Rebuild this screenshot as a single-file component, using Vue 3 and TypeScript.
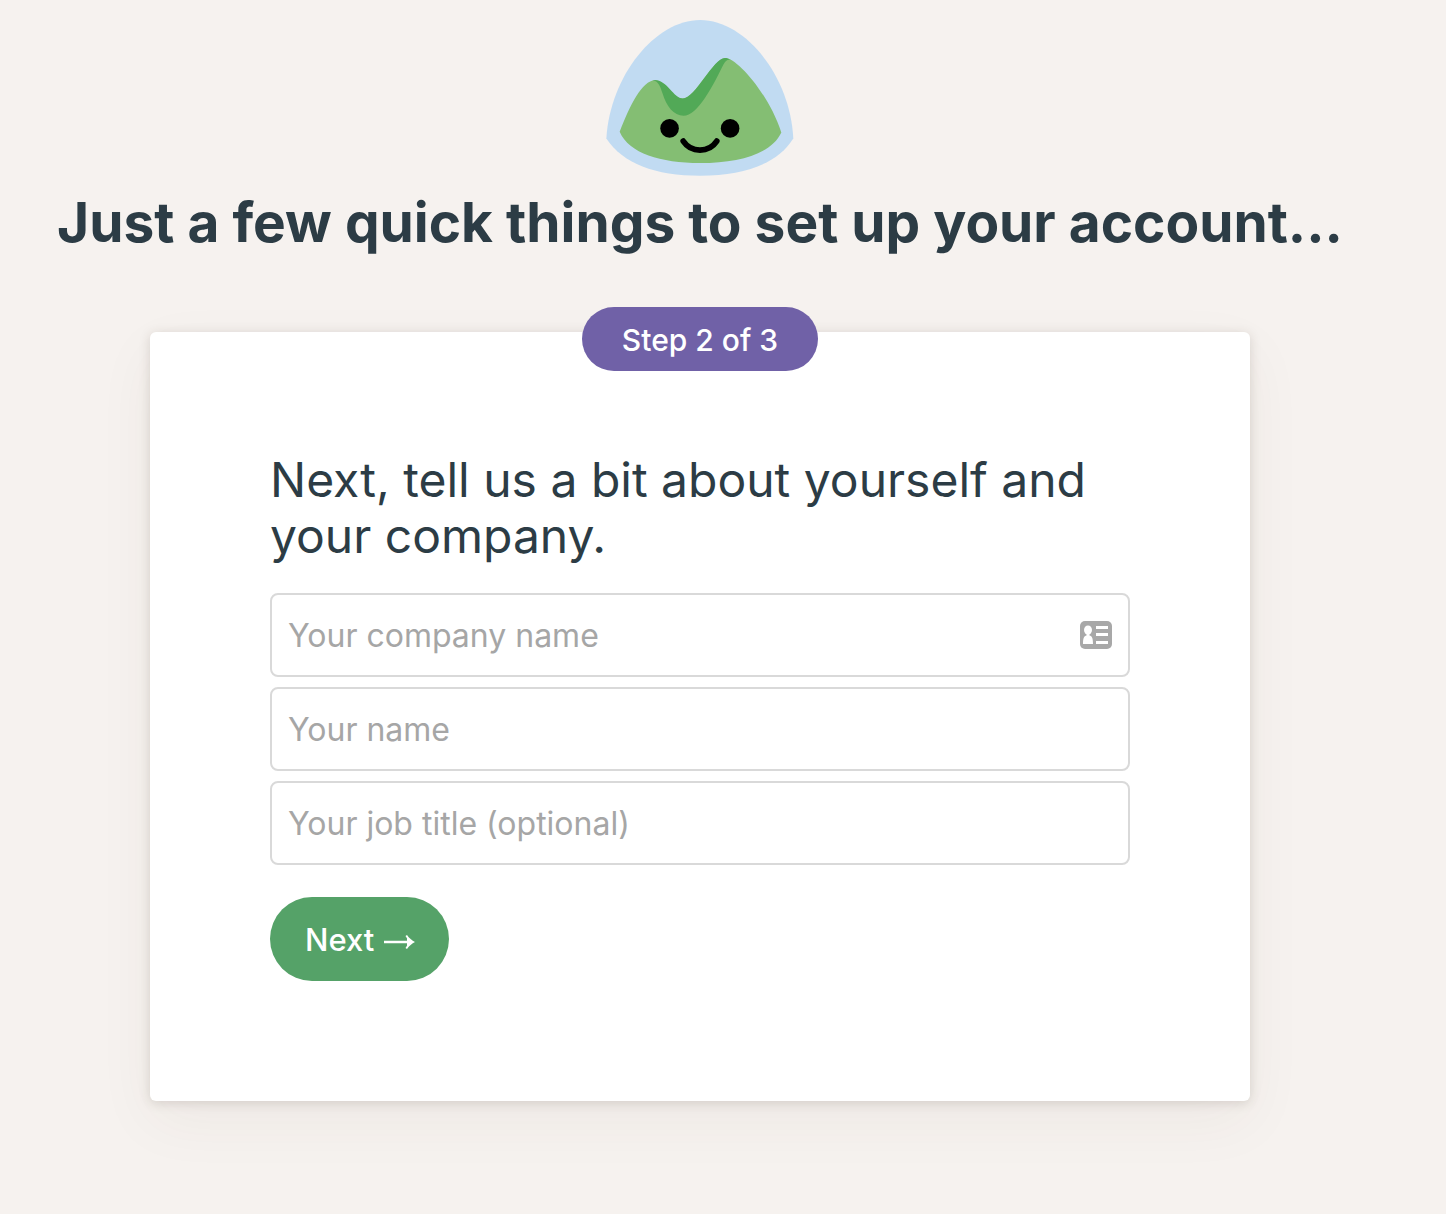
<script setup lang="ts">
import { reactive } from 'vue'

interface Field {
  id: 'company' | 'name' | 'title'
  placeholder: string
  hasContactIcon?: boolean
}

const fields: Field[] = [
  { id: 'company', placeholder: 'Your company name', hasContactIcon: true },
  { id: 'name', placeholder: 'Your name' },
  { id: 'title', placeholder: 'Your job title (optional)' },
]

const form = reactive({ company: '', name: '', title: '' })
</script>

<template>
  <main class="page">
    <header class="intro">
      <svg class="logo" viewBox="49 29 563 469" aria-hidden="true">
        <path fill="#c1dbf2" d="M331 29C467 29 602 198 611 385C564 460 466 497 331 497C196 497 98 460 49 385C60 198 195 29 331 29Z" />
        <path fill="#84be73" d="M89 365C119 287 157 210 195 210C229 210 247 265 279 265C315 265 371 143 407 143C440 143 535 246 575 367C546 430 450 459 331 459C212 459 117 430 89 365Z" />
        <path fill="#52a957" d="M188 210C231 204 249 265 279 265C316 265 371 143 405 143C411 143 416 145 422 149C413 147 407 151 401 163C367 232 323 317 281 317C252 317 229 288 218 250C210 225 205 213 188 210Z" />
        <circle cx="239" cy="355" r="28" />
        <circle cx="421" cy="355" r="28" />
        <path d="M280 393C304 429 357 429 381 393" fill="none" stroke="#000" stroke-width="17" stroke-linecap="round" />
      </svg>
      <h1>Just a few quick things to set up your account...</h1>
    </header>

    <section class="card">
      <p class="step">Step 2 of 3</p>
      <h2>Next, tell us a bit about yourself and your company.</h2>
      <form @submit.prevent>
        <div v-for="field in fields" :key="field.id" class="field">
          <input
            :id="field.id"
            v-model="form[field.id]"
            type="text"
            :placeholder="field.placeholder"
            :aria-label="field.placeholder"
          />
          <svg v-if="field.hasContactIcon" class="contact" viewBox="0 0 32 28" aria-hidden="true">
            <rect width="32" height="28" rx="5" fill="#a8a8a8" />
            <g fill="#fff">
              <ellipse cx="8" cy="9" rx="4" ry="4.500" />
              <path d="M3 23C3 17 4 15 6.500 14.500V12H9.500V14.500C12 15 13 17 13 23Z" />
              <rect x="16" y="5" width="12" height="3" />
              <rect x="16" y="12" width="12" height="3" />
              <rect x="16" y="20" width="12" height="3" />
            </g>
          </svg>
        </div>
        <button type="submit">
          Next
          <svg class="arrow" viewBox="0 0 31 14" aria-hidden="true">
            <path d="M0 5.700H24C23.500 4 22.500 2.500 21.500 1L23 0C25 3 28 5.500 31 7C28 8.500 25 11 23 14L21.500 13C22.500 11.500 23.500 10 24 8.300H0Z" fill="#fff" />
            <path d="M23 3L29 7L23 11Z" fill="#fff" />
          </svg>
        </button>
      </form>
    </section>
  </main>
</template>

<style>
body {
  background: #f6f2ef;
}
</style>

<style scoped>
.page {
  box-sizing: border-box;
  padding: 20px 46px 112px 0;
  font-family: Inter, "Liberation Sans", sans-serif;
  color: #2c3c45;
}

.intro {
  display: flex;
  flex-direction: column;
  align-items: center;
}

.logo {
  width: 188px;
  height: 156px;
}

h1 {
  margin: 12px 0 0;
  font-size: 55px;
  font-weight: 700;
  line-height: 68px;
  text-align: center;
  white-space: nowrap;
}

.card {
  position: relative;
  box-sizing: border-box;
  width: calc(100% - 32px);
  max-width: 1100px;
  margin: 76px auto 0;
  padding: 120px;
  border-radius: 6px;
  background: #fff;
  box-shadow: 0 2px 12px rgba(70, 50, 40, 0.16), 0 20px 60px rgba(70, 50, 40, 0.05);
}

.step {
  position: absolute;
  top: -25px;
  left: 50%;
  transform: translateX(-50%);
  box-sizing: border-box;
  min-width: 236px;
  margin: 0;
  padding: 0 36px;
  border-radius: 32px;
  background: #7061a7;
  color: #fff;
  font-size: 30px;
  font-weight: 500;
  line-height: 66px;
  height: 64px;
  text-align: center;
  white-space: nowrap;
}

h2 {
  margin: 0 0 29px;
  font-size: 48px;
  font-weight: 400;
  line-height: 56px;
}

form {
  display: flex;
  flex-direction: column;
  align-items: flex-start;
  gap: 10px;
}

.field {
  position: relative;
  width: 100%;
}

input {
  box-sizing: border-box;
  display: block;
  width: 100%;
  height: 84px;
  padding: 0 72px 0 16px;
  border: 2px solid #d9d9d9;
  border-radius: 8px;
  background: #fff;
  color: #2c3c45;
  font: 400 32px/40px Inter, "Liberation Sans", sans-serif;
}

input::placeholder {
  color: #a6a6a6;
  opacity: 1;
}

.contact {
  position: absolute;
  top: 28px;
  right: 18px;
  width: 32px;
  height: 28px;
}

button {
  display: flex;
  align-items: center;
  gap: 10px;
  height: 84px;
  margin-top: 22px;
  padding: 2px 34px 0 35px;
  border: 0;
  border-radius: 42px;
  background: #55a268;
  color: #fff;
  font: 500 31px/40px Inter, "Liberation Sans", sans-serif;
}

.arrow {
  width: 31px;
  height: 14px;
  margin-top: 4px;
}
</style>
